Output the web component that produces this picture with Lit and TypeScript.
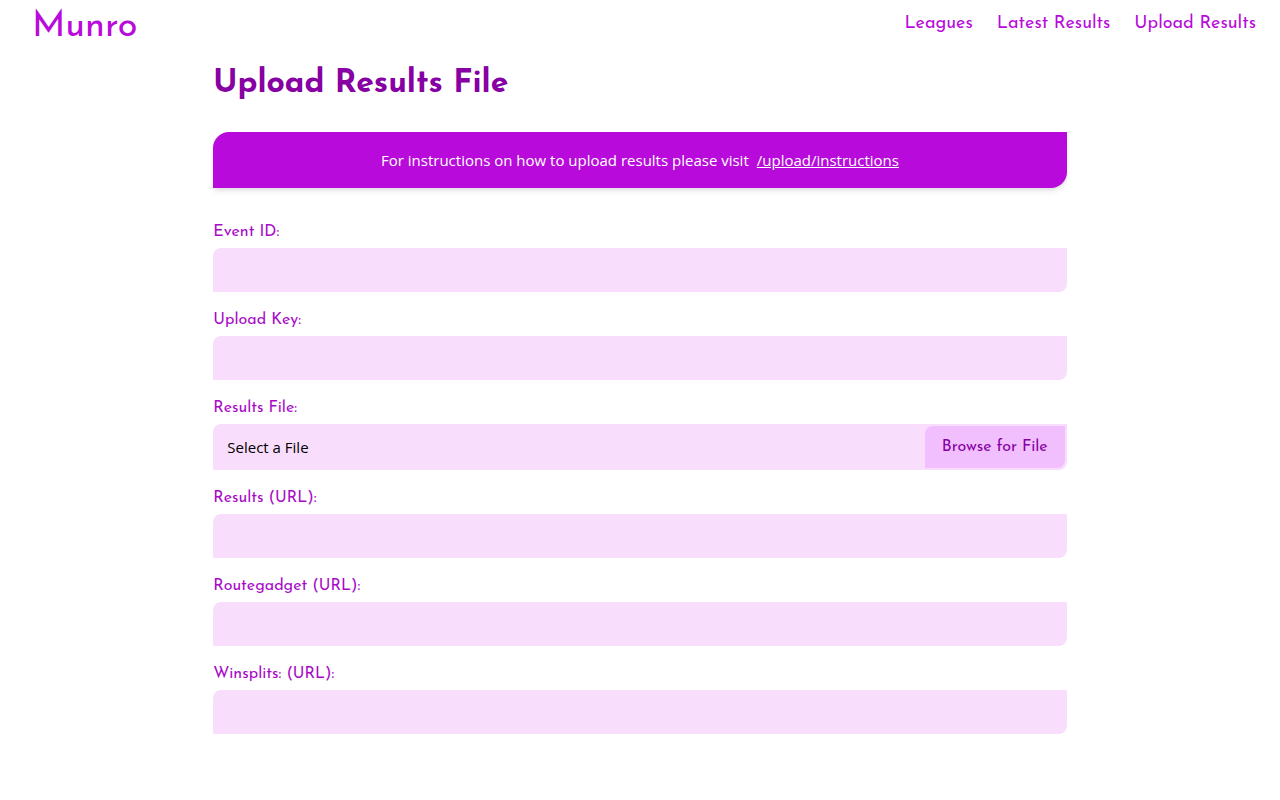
import { LitElement, html, css } from "lit";
import { customElement, state } from "lit/decorators.js";

interface Field {
  id: string;
  label: string;
  kind: "text" | "file";
}

const FIELDS: Field[] = [
  { id: "event-id", label: "Event ID:", kind: "text" },
  { id: "upload-key", label: "Upload Key:", kind: "text" },
  { id: "results-file", label: "Results File:", kind: "file" },
  { id: "results-url", label: "Results (URL):", kind: "text" },
  { id: "routegadget-url", label: "Routegadget (URL):", kind: "text" },
  { id: "winsplits-url", label: "Winsplits: (URL):", kind: "text" },
];

@customElement("app-root")
export class AppRoot extends LitElement {
  static styles = css`
    :host {
      display: block;
      min-height: 100vh;
      background: #fff;
      color: #000;
      font-family: "Josefin Sans", Lato, sans-serif;
      font-size: 16px;
      font-weight: 400;
      line-height: 24px;
    }
    * {
      box-sizing: border-box;
    }
    .header {
      display: flex;
      align-items: center;
      justify-content: space-between;
      padding: 4px 24px 0 32px;
      color: #b80bdb;
    }
    .brand {
      font-size: 36px;
      line-height: 46px;
      color: inherit;
      text-decoration: none;
    }
    .nav {
      display: flex;
      gap: 24px;
      padding-bottom: 6px;
    }
    .nav-link {
      font-size: 18px;
      color: inherit;
      text-decoration: none;
    }
    .page {
      width: 66.6667%;
      margin: 0 auto;
      padding: 10px 0 24px;
    }
    .title {
      margin: 0 0 24px;
      font-size: 32px;
      line-height: 48px;
      font-weight: 700;
      color: #8600a3;
    }
    .notice {
      display: flex;
      flex-wrap: wrap;
      justify-content: center;
      gap: 0 8px;
      margin: 0 0 32px;
      padding: 16px;
      border-radius: 16px 0;
      background: #b80bdb;
      color: #fff;
      box-shadow: 0 4px 6px -1px rgba(0, 0, 0, 0.1), 0 2px 4px -1px rgba(0, 0, 0, 0.06);
      font-family: "Segoe UI", "Open Sans", sans-serif;
      font-size: 15px;
      font-weight: 500;
    }
    .notice-link {
      color: inherit;
    }
    .form {
      display: flex;
      flex-direction: column;
      gap: 16px;
    }
    .field {
      display: flex;
      flex-direction: column;
      gap: 4px;
    }
    .label {
      color: #a80bc8;
    }
    .input,
    .file {
      width: 100%;
      border: 2px solid #f8ddfc;
      border-radius: 8px 0;
      background: #f8ddfc;
      font-family: "Segoe UI", "Open Sans", sans-serif;
      font-size: 15px;
      font-weight: 400;
      line-height: 24px;
    }
    .input {
      padding: 8px 12px;
      outline: none;
    }
    .input:focus,
    .file:focus-within {
      border-color: #b80bdb;
    }
    .file {
      display: flex;
      align-items: center;
      justify-content: space-between;
      padding-left: 12px;
    }
    .browse {
      padding: 9px 17px;
      border: 0;
      border-radius: 8px 0;
      background: #f1bffe;
      color: #8600a3;
      font-family: "Josefin Sans", Lato, sans-serif;
      font-size: 16px;
      line-height: 24px;
      cursor: pointer;
    }
  `;

  @state() private fileName = "";

  private browse() {
    this.renderRoot.querySelector<HTMLInputElement>("#results-file")?.click();
  }

  private picked(e: Event) {
    this.fileName = (e.target as HTMLInputElement).files?.[0]?.name ?? "";
  }

  private renderControl(f: Field) {
    if (f.kind === "text") {
      return html`<input class="input" id=${f.id} name=${f.id} type="text" />`;
    }
    return html`
      <div class="file">
        <span>${this.fileName || "Select a File"}</span>
        <input id=${f.id} name=${f.id} type="file" hidden @change=${this.picked} />
        <button class="browse" type="button" @click=${this.browse}>Browse for File</button>
      </div>
    `;
  }

  render() {
    return html`
      <header class="header">
        <a class="brand" href="#/">Munro</a>
        <nav class="nav">
          <a class="nav-link" href="#/leagues">Leagues</a>
          <a class="nav-link" href="#/results">Latest Results</a>
          <a class="nav-link" href="#/upload">Upload Results</a>
        </nav>
      </header>
      <main class="page">
        <h1 class="title">Upload Results File</h1>
        <p class="notice">
          <span>For instructions on how to upload results please visit</span>
          <a class="notice-link" href="#/upload/instructions">/upload/instructions</a>
        </p>
        <form class="form">
          ${FIELDS.map(
            (f) => html`
              <div class="field">
                <label class="label" for=${f.id}>${f.label}</label>
                ${this.renderControl(f)}
              </div>
            `
          )}
        </form>
      </main>
    `;
  }
}
